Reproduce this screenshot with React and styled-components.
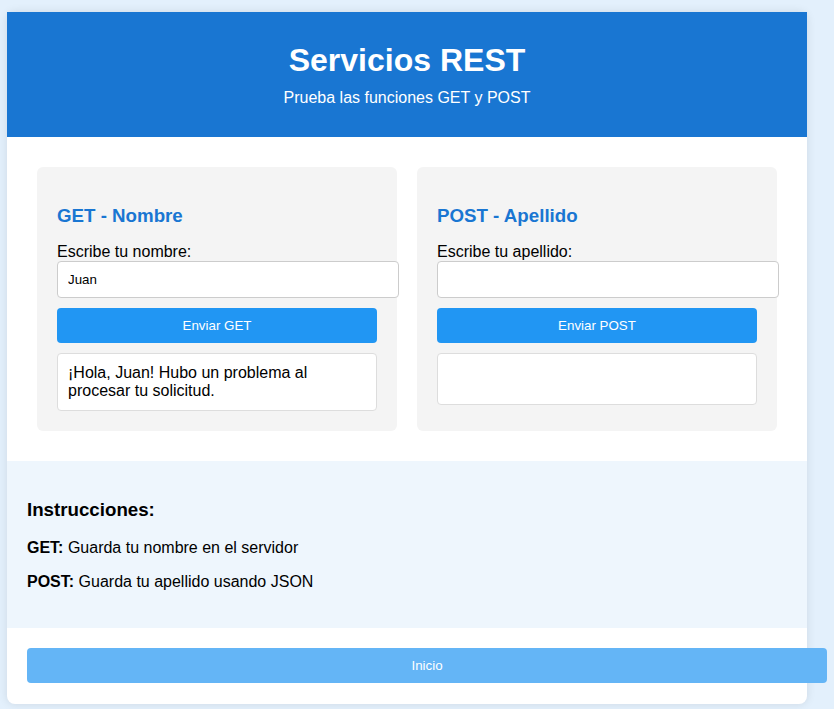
import React, { useState } from 'react';
import styled, { createGlobalStyle } from 'styled-components';

const blue_dark = '#1976d2';
const blue = '#2196f3';
const blue_light = '#64b5f6';

const GlobalStyle = createGlobalStyle`
  html, body {
    margin: 0;
    background: #e3f0fc;
    font-family: "Liberation Sans", Arial, sans-serif;
  }
  body {
    padding: 12px 7px 6px;
  }
`;

const Panel = ({ title, label, value, onChange, buttonText, result }) => (
  <Card>
    <CardTitle>{title}</CardTitle>
    <Label>{label}</Label>
    <Input type="text" value={value} onChange={onChange} />
    <SendButton type="button">{buttonText}</SendButton>
    <Result>{result}</Result>
  </Card>
);

const App = () => {
  const [nombre, setNombre] = useState('Juan');
  const [apellido, setApellido] = useState('');

  return (
    <>
      <GlobalStyle />
      <Container>
        <Header>
          <h1>Servicios REST</h1>
          <p>Prueba las funciones GET y POST</p>
        </Header>
        <Services>
          <Panel
            title="GET - Nombre"
            label="Escribe tu nombre:"
            value={nombre}
            onChange={(e) => setNombre(e.target.value)}
            buttonText="Enviar GET"
            result="¡Hola, Juan! Hubo un problema al procesar tu solicitud."
          />
          <Panel
            title="POST - Apellido"
            label="Escribe tu apellido:"
            value={apellido}
            onChange={(e) => setApellido(e.target.value)}
            buttonText="Enviar POST"
            result=""
          />
        </Services>
        <Instructions>
          <h3>Instrucciones:</h3>
          <p>
            <strong>GET:</strong> Guarda tu nombre en el servidor
          </p>
          <p>
            <strong>POST:</strong> Guarda tu apellido usando JSON
          </p>
        </Instructions>
        <Footer>
          <HomeButton type="button">Inicio</HomeButton>
        </Footer>
      </Container>
    </>
  );
};

export default App;

const Container = styled.div`
  width: 800px;
  background: #fff;
  border-radius: 8px;
  box-shadow: 0 0 10px rgba(0, 0, 0, 0.1);
`;

const Header = styled.header`
  background: ${blue_dark};
  color: #fff;
  text-align: center;
  padding: 30px 20px 30px;

  h1 {
    margin: 0;
    font-size: 32px;
    line-height: 37px;
  }
  p {
    margin: 10px 0 0;
    font-size: 16px;
  }
`;

const Services = styled.div`
  display: grid;
  grid-template-columns: 1fr 1fr;
  gap: 20px;
  padding: 30px;
`;

const Card = styled.div`
  background: #f4f4f4;
  border-radius: 6px;
  padding: 20px;
`;

const CardTitle = styled.h3`
  color: ${blue_dark};
  font-size: 18.72px;
  margin: 18px 0 16px;
`;

const Label = styled.label`
  display: block;
  font-size: 16px;
`;

const Input = styled.input`
  display: block;
  width: 100%;
  padding: 10px;
  border: 1px solid #ccc;
  border-radius: 4px;
  font-family: "Liberation Sans", Arial, sans-serif;
  font-size: 13.33px;
  line-height: 15px;
  outline: none;
`;

const SendButton = styled.button`
  display: block;
  width: 100%;
  margin-top: 10px;
  padding: 10px;
  border: none;
  border-radius: 4px;
  background: ${blue};
  color: #fff;
  font-family: "Liberation Sans", Arial, sans-serif;
  font-size: 13.33px;
  line-height: 15px;
  cursor: pointer;
`;

const Result = styled.div`
  margin-top: 10px;
  min-height: 30px;
  padding: 10px;
  background: #fff;
  border: 1px solid #ddd;
  border-radius: 4px;
  font-size: 16px;
  line-height: 18px;
`;

const Instructions = styled.div`
  background: #eef6fd;
  padding: 20px 20px 21px;

  h3 {
    margin: 18px 0 18px;
    font-size: 18.72px;
  }
  p {
    margin: 16px 0;
    font-size: 16px;
  }
`;

const Footer = styled.div`
  padding: 20px 20px 21px;
`;

const HomeButton = styled.button`
  display: block;
  box-sizing: content-box;
  width: 100%;
  padding: 10px 20px;
  border: none;
  border-radius: 4px;
  background: ${blue_light};
  color: #fff;
  font-family: "Liberation Sans", Arial, sans-serif;
  font-size: 13.33px;
  line-height: 15px;
  cursor: pointer;
`;
